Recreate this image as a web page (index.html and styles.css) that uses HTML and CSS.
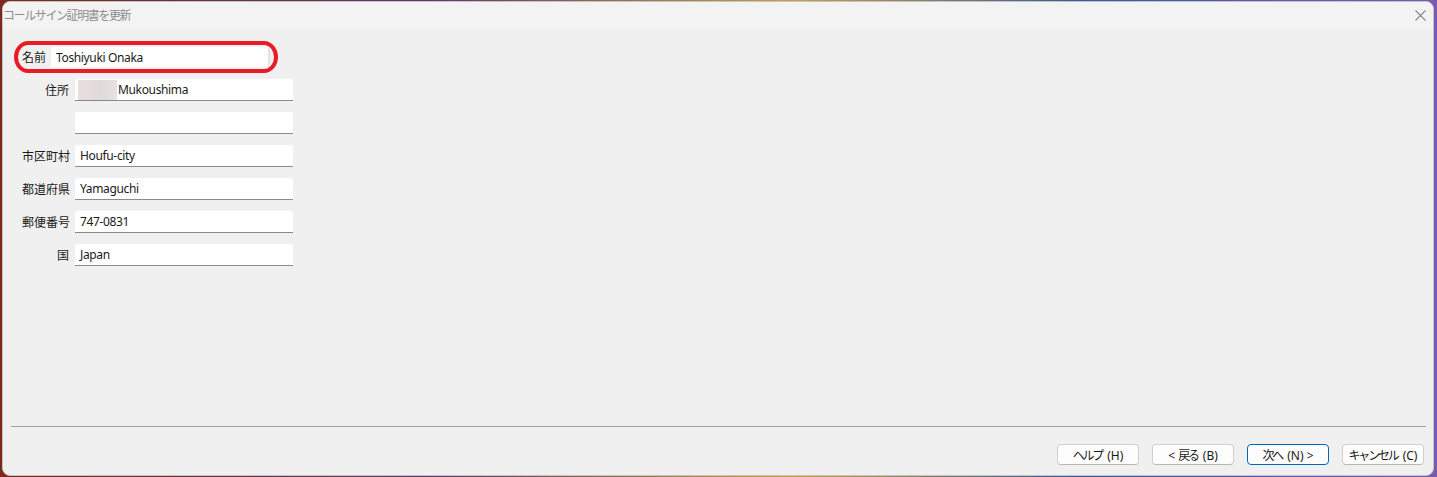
FILE: index.html
```html
<!DOCTYPE html>
<html lang="ja">
<head>
    <meta charset="UTF-8">
    <title>コールサイン証明書を更新</title>
    <link rel="stylesheet" href="styles.css">
</head>
<body>
    <div class="window">
        <div class="titlebar">
            <span class="title">コールサイン証明書を更新</span>
            <svg class="close" width="11" height="11" viewBox="0 0 11 11">
                <path d="M0.5 0.5 L10.5 10.5 M10.5 0.5 L0.5 10.5" stroke="#8a8a8a" stroke-width="1.1" fill="none"/>
            </svg>
        </div>

        <div class="content">
            <div class="name-row">
                <span class="label">名前</span>
                <div class="field name-field">Toshiyuki Onaka</div>
                <div class="highlight"></div>
            </div>

            <div class="address">
                <span class="label">住所</span>
                <div class="field"><span class="redacted"></span>Mukoushima</div>

                <span class="label"></span>
                <div class="field"></div>

                <span class="label">市区町村</span>
                <div class="field">Houfu-city</div>

                <span class="label">都道府県</span>
                <div class="field">Yamaguchi</div>

                <span class="label">郵便番号</span>
                <div class="field">747-0831</div>

                <span class="label">国</span>
                <div class="field">Japan</div>
            </div>
        </div>

        <div class="footer">
            <div class="separator"></div>
            <div class="buttons">
                <button class="btn"><span class="jp">ヘルプ</span> (H)</button>
                <button class="btn">&lt; <span class="jp">戻る</span> (B)</button>
                <button class="btn default"><span class="jp">次へ</span> (N) &gt;</button>
                <button class="btn"><span class="jp">キャンセル</span> (C)</button>
            </div>
        </div>
    </div>
</body>
</html>
```

FILE: styles.css
```css
* {
    margin: 0;
    padding: 0;
    box-sizing: border-box;
}

body {
    width: 1437px;
    height: 477px;
    overflow: hidden;
    background: linear-gradient(90deg, #7a2a1c 0%, #5a3a6a 30%, #c9a040 55%, #3a5a9a 75%, #7a5ab0 100%);
    padding: 1px 3px 1px 2px;
    font-family: "Noto Sans", "Noto Sans CJK JP", sans-serif;
    font-size: 12px;
    color: #1a1a1a;
}

.window {
    height: 475px;
    background: #f0f0f0;
    border: 1px solid #c4c4c4;
    border-radius: 8px;
    display: flex;
    flex-direction: column;
    overflow: hidden;
}

.titlebar {
    height: 26px;
    background: #f3f3f3;
    display: flex;
    align-items: center;
    justify-content: space-between;
    padding: 0 7px 0 0;
}

.title {
    color: #8c8c8c;
    font-size: 12px;
    letter-spacing: -1.4px;
}

.close {
    margin-top: 1px;
}

.content {
    flex: 1;
    padding: 19px 0 0 19px;
}

.name-row {
    position: relative;
    display: flex;
    align-items: center;
    gap: 5px;
    height: 20px;
}

.name-row .label {
    width: 24px;
    white-space: nowrap;
}

.field {
    height: 21px;
    background: #fff;
    border-bottom: 1px solid #8a8a8a;
    border-radius: 2px 2px 0 0;
    padding: 0 5px;
    display: flex;
    align-items: center;
    white-space: nowrap;
    letter-spacing: -0.35px;
}

.name-field {
    width: 219px;
    height: 20px;
    border-bottom: none;
    border-right: 2px solid #e4e4e4;
}

.highlight {
    position: absolute;
    left: -8px;
    top: -6px;
    width: 264px;
    height: 32px;
    border: 4px solid #e81c24;
    border-radius: 14px / 50%;
    pointer-events: none;
}

.address {
    display: grid;
    grid-template-columns: 47px 218px;
    column-gap: 6px;
    row-gap: 11px;
    margin-top: 12px;
    align-items: center;
}

.address .field {
    height: 22px;
}

.address .label {
    text-align: right;
    white-space: nowrap;
}

.redacted {
    width: 39px;
    height: 20px;
    margin-left: -2px;
    margin-right: 1px;
    background: linear-gradient(90deg, #eadede, #e0dada 60%, #e6e2e2);
}

.footer {
    padding: 0 7px 10px 8px;
}

.separator {
    height: 1px;
    background: #a0a0a0;
    margin-bottom: 17px;
}

.buttons {
    display: flex;
    justify-content: flex-end;
    gap: 13px;
    padding-right: 2px;
}

.btn {
    width: 82px;
    height: 21px;
    background: #fdfdfd;
    border: 1px solid #d0d0d0;
    border-bottom-color: #b8b8b8;
    border-radius: 4px;
    font-family: "Noto Sans", "Noto Sans CJK JP", sans-serif;
    font-size: 12px;
    color: #1a1a1a;
    white-space: nowrap;
}

.btn .jp {
    letter-spacing: -2.2px;
    margin-right: 2px;
}

.btn.default {
    border: 1px solid #0067c0;
}
```
